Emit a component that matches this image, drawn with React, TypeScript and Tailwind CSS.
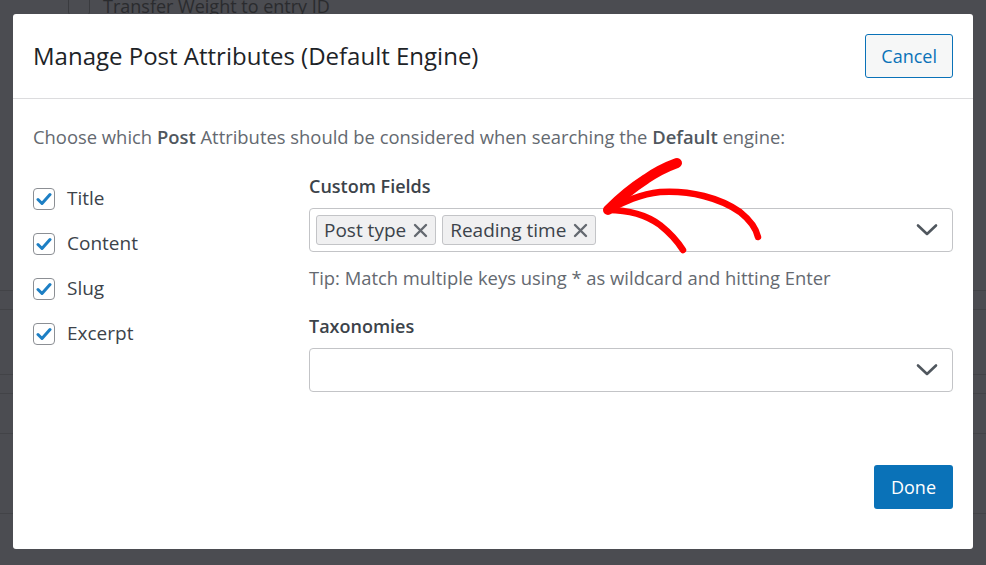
import React from 'react';

const font = { fontFamily: '"Open Sans", "Noto Sans", sans-serif' };

function Check({ label }: { label: string }) {
    return (
        <label className="flex items-center gap-[12px] h-[45px]">
            <span className="w-[22px] h-[22px] rounded-[4px] border border-[#8c8f94] bg-white flex items-center justify-center">
                <svg width="16" height="14" viewBox="0 0 16 14">
                    <path d="M2 7.5 L6 11.5 L14 2.5" fill="none" stroke="#1d7fc4" strokeWidth="3" strokeLinecap="round" strokeLinejoin="round" />
                </svg>
            </span>
            <span className="text-[19px] text-[#3c434a]">{label}</span>
        </label>
    );
}

function Tag({ text }: { text: string }) {
    return (
        <span className="h-[30px] px-[7px] flex items-center gap-[7px] bg-[#f0f0f1] border border-[#c3c4c7] rounded-[3px] text-[19px] text-[#3c434a]">
            {text}
            <svg width="15" height="15" viewBox="0 0 15 15">
                <path d="M2 2 L13 13 M13 2 L2 13" stroke="#646970" strokeWidth="2.4" strokeLinecap="round" />
            </svg>
        </span>
    );
}

function Chevron() {
    return (
        <svg width="22" height="14" viewBox="0 0 22 14" className="ml-auto">
            <path d="M2 2.5 L11 11 L20 2.5" fill="none" stroke="#50575e" strokeWidth="2.6" strokeLinecap="round" strokeLinejoin="round" />
        </svg>
    );
}

export default function App() {
    return (
        <div className="relative w-[986px] h-[565px] overflow-hidden bg-[#4b4c51]" style={font}>
            {/* page behind the overlay */}
            <div className="absolute inset-0">
                <div className="absolute left-[68px] top-[-6px] w-[22px] h-[22px] rounded-[4px] border border-[#3a3b3f]" />
                <div className="absolute left-[103px] top-[-4px] text-[18px] leading-[20px] text-[#2a2b2e]">Transfer Weight to entry ID</div>
                <div className="absolute left-0 right-0 top-[290px] border-t border-[#424347]" />
                <div className="absolute left-0 right-0 top-[309px] border-t border-[#424347]" />
                <div className="absolute left-0 right-0 top-[374px] border-t border-[#424347]" />
                <div className="absolute left-0 right-0 top-[393px] border-t border-[#424347]" />
                <div className="absolute left-0 right-0 top-[433px] border-t border-[#424347]" />
                <div className="absolute left-0 right-0 top-[513px] border-t border-[#424347]" />
            </div>

            <div className="relative ml-[13px] mt-[14px] w-[960px] h-[535px] bg-white rounded-[3px] flex flex-col">
                <div className="h-[85px] px-[20px] flex items-center justify-between border-b border-[#dcdcde]">
                    <h1 className="text-[24px] text-[#1d2327]">Manage Post Attributes (Default Engine)</h1>
                    <button className="h-[44px] px-[15px] rounded-[3px] border border-[#0a72b8] bg-[#f6f7f7] text-[18px] text-[#0a72b8]">Cancel</button>
                </div>

                <div className="px-[20px] pt-[26px] flex-1 flex flex-col">
                    <p className="text-[18.4px] leading-[24px] text-[#646970]">
                        Choose which <b className="font-semibold text-[#50575e]">Post</b> Attributes should be considered when searching the <b className="font-semibold text-[#50575e]">Default</b> engine:
                    </p>

                    <div className="flex mt-[25px]">
                        <div className="w-[276px] pt-[2px] flex flex-col">
                            <Check label="Title" />
                            <Check label="Content" />
                            <Check label="Slug" />
                            <Check label="Excerpt" />
                        </div>
                        <div className="flex-1 flex flex-col">
                            <div className="text-[18px] font-semibold leading-[24px] text-[#3c434a]">Custom Fields</div>
                            <div className="mt-[10px] h-[44px] border border-[#c3c4c7] rounded-[4px] pl-[6px] pr-[14px] flex items-center gap-[6px]">
                                <Tag text="Post type" />
                                <Tag text="Reading time" />
                                <Chevron />
                            </div>
                            <div className="mt-[14px] text-[18.4px] leading-[24px] text-[#646970]">Tip: Match multiple keys using * as wildcard and hitting Enter</div>
                            <div className="mt-[24px] text-[18px] font-semibold leading-[24px] text-[#3c434a]">Taxonomies</div>
                            <div className="mt-[10px] h-[44px] border border-[#c3c4c7] rounded-[4px] pr-[14px] flex items-center">
                                <Chevron />
                            </div>
                        </div>
                    </div>

                    <div className="mt-auto mb-[40px] flex justify-end">
                        <button className="h-[44px] px-[17px] rounded-[3px] bg-[#0a72b8] text-[18px] text-white">Done</button>
                    </div>
                </div>

                {/* hand-drawn annotation arrow */}
                <svg className="absolute left-0 top-0 pointer-events-none" width="960" height="535" viewBox="0 0 960 535">
                    <g transform="translate(-13 -14)" fill="none" stroke="#ff0000" strokeLinecap="round" strokeLinejoin="round">
                        <path d="M608 210 C620 198 632 188 646 179 C656 172 666 167 677 163" strokeWidth="10" />
                        <path d="M608 210 C624 202 640 194 660 192 C690 190 720 198 740 212 C750 220 756 228 758 237" strokeWidth="6.5" />
                        <path d="M608 210 C626 210 645 214 660 225 C670 233 678 242 683 250" strokeWidth="6.5" />
                    </g>
                </svg>
            </div>
        </div>
    );
}
